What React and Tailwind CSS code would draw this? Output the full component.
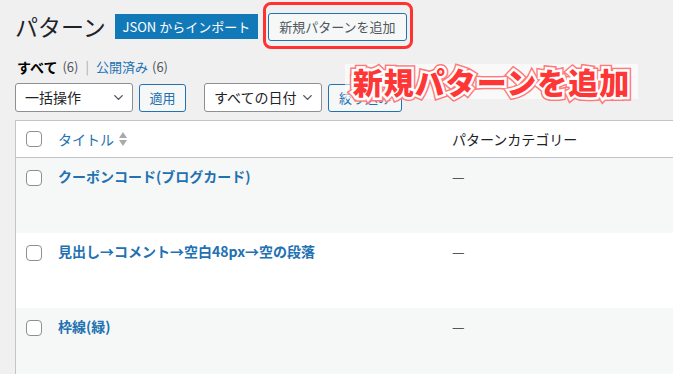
import { ChevronDown } from "lucide-react";

const jp = "font-['Noto_Sans_CJK_JP','Noto_Sans',sans-serif]";

const rows = [
  { title: "クーポンコード(ブログカード)", bg: "bg-[#f6f7f7]" },
  { title: "見出し→コメント→空白48px→空の段落", bg: "bg-white" },
  { title: "枠線(緑)", bg: "bg-[#f6f7f7]" },
];

function Checkbox() {
  return <span className="block w-4 h-4 rounded-[4px] border border-[#8c8f94] bg-white" />;
}

function SortArrows() {
  return (
    <svg width="10" height="16" viewBox="0 0 10 16" className="ml-1">
      <path d="M5 1 L9 7 H1 Z" fill="#a7aaad" />
      <path d="M5 15 L9 9 H1 Z" fill="#a7aaad" />
    </svg>
  );
}

export default function App() {
  return (
    <div className={`${jp} relative w-[673px] h-[374px] overflow-hidden bg-[#f0f0f1] text-[#1d2327] pl-[15px]`}>
      {/* header */}
      <div className="flex items-center h-[52px] pt-[1px]">
        <h1 className="whitespace-nowrap shrink-0 text-[23px] leading-[30px] font-normal mr-[9px] -mt-[1px]">パターン</h1>
        <button className="shrink-0 h-[25px] w-[143px] bg-[#1279b9] text-white text-[13px] leading-[25px] mr-[10px]">
          JSON からインポート
        </button>
        <div className="relative shrink-0">
          <button className="h-[28px] w-[139px] rounded-[3px] border border-[#2271b1] bg-[#f6f7f7] text-[#50575e] text-[13px] leading-[26px]">
            新規パターンを追加
          </button>
          <span className="absolute -left-[5px] -right-[6px] -top-[11px] -bottom-[8px] border-[3px] border-[#ff3131] rounded-[8px]" />
        </div>
      </div>

      {/* status links */}
      <div className="flex items-center text-[13px] leading-[20px] mt-[5px] pl-[2px]">
        <span className="font-bold text-[14px] text-black">すべて</span>
        <span className="text-[#50575e] ml-[5px]">(6)</span>
        <span className="text-[#a7aaad] mx-[7px]">|</span>
        <span className="text-[#2271b1]">公開済み</span>
        <span className="text-[#50575e] ml-[4px]">(6)</span>
      </div>

      {/* filters */}
      <div className="flex items-center mt-[6px] h-[29px]">
        <div className="flex items-center justify-between w-[118px] h-[29px] rounded-[3px] border border-[#8c8f94] bg-white pl-[9px] pr-[6px] text-[14px]">
          <span>一括操作</span>
          <ChevronDown size={15} strokeWidth={2.25} className="text-[#50575e]" />
        </div>
        <button className="ml-[6px] w-[47px] h-[28px] rounded-[3px] border border-[#2271b1] bg-[#f6f7f7] text-[#2271b1] text-[13px]">
          適用
        </button>
        <div className="ml-[18px] flex items-center justify-between w-[118px] h-[29px] rounded-[3px] border border-[#8c8f94] bg-white pl-[9px] pr-[6px] text-[14px]">
          <span>すべての日付</span>
          <ChevronDown size={15} strokeWidth={2.25} className="text-[#50575e]" />
        </div>
        <button className="ml-[6px] w-[74px] h-[28px] rounded-[3px] border border-[#2271b1] bg-[#f6f7f7] text-[#2271b1] text-[13px]">
          絞り込み
        </button>
      </div>

      {/* table */}
      <div className="mt-[8px] border-l border-t border-[#c3c4c7] w-[700px] bg-white">
        <div className="grid grid-cols-[42px_394px_1fr] h-[37px] items-center border-b border-[#c3c4c7] text-[14px]">
          <div className="pl-[10px]"><Checkbox /></div>
          <div className="flex items-center text-[#2271b1]">
            タイトル
            <SortArrows />
          </div>
          <div className="text-[#1d2327]">パターンカテゴリー</div>
        </div>
        {rows.map((r) => (
          <div key={r.title} className={`grid grid-cols-[42px_394px_1fr] h-[75px] ${r.bg} text-[14px]`}>
            <div className="pl-[10px] pt-[12px]"><Checkbox /></div>
            <div className="pt-[8px] leading-[20px] font-bold text-[#2271b1]">{r.title}</div>
            <div className="pt-[8px] leading-[20px] text-[#50575e]">—</div>
          </div>
        ))}
      </div>

      {/* annotation */}
      <div className="absolute left-[345px] top-[64px] w-[293px] h-[35px] bg-white/60 flex items-center justify-center">
        <div className="grid text-[30px] leading-[35px] font-black tracking-[1px]">
          <span className="col-start-1 row-start-1 text-[#ff6e6e] [-webkit-text-stroke:8px_#ff7a7a] [paint-order:stroke_fill]">
            新規パターンを追加
          </span>
          <span className="col-start-1 row-start-1 text-[#ff3636] [-webkit-text-stroke:5px_#ffffff] [paint-order:stroke_fill]">
            新規パターンを追加
          </span>
        </div>
      </div>
    </div>
  );
}
